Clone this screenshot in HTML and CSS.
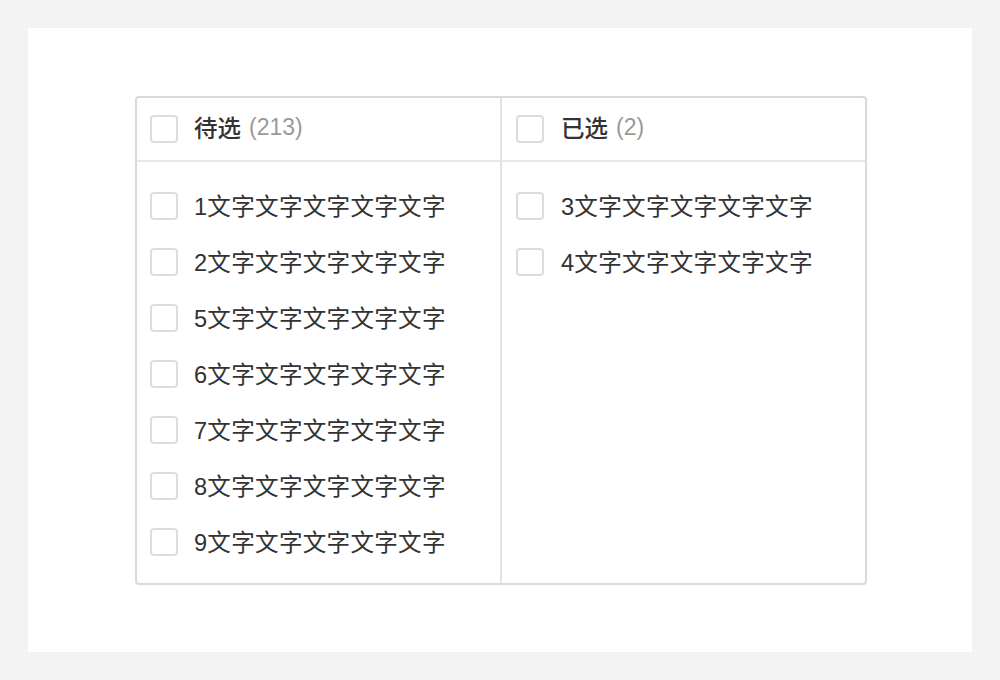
FILE: index.html
```html
<!DOCTYPE html>
<html lang="zh-CN">
<head>
<meta charset="utf-8">
<title>Transfer</title>
<link rel="stylesheet" href="styles.css">
</head>
<body>
<div class="card">
  <div class="transfer">
    <div class="panel">
      <div class="panel-head">
        <span class="checkbox"></span>
        <span class="title">待选</span><span class="count">(213)</span>
      </div>
      <ul class="list">
        <li class="item"><span class="checkbox"></span><span class="label">1文字文字文字文字文字</span></li>
        <li class="item"><span class="checkbox"></span><span class="label">2文字文字文字文字文字</span></li>
        <li class="item"><span class="checkbox"></span><span class="label">5文字文字文字文字文字</span></li>
        <li class="item"><span class="checkbox"></span><span class="label">6文字文字文字文字文字</span></li>
        <li class="item"><span class="checkbox"></span><span class="label">7文字文字文字文字文字</span></li>
        <li class="item"><span class="checkbox"></span><span class="label">8文字文字文字文字文字</span></li>
        <li class="item"><span class="checkbox"></span><span class="label">9文字文字文字文字文字</span></li>
      </ul>
    </div>
    <div class="panel panel-right">
      <div class="panel-head">
        <span class="checkbox"></span>
        <span class="title">已选</span><span class="count">(2)</span>
      </div>
      <ul class="list">
        <li class="item"><span class="checkbox"></span><span class="label">3文字文字文字文字文字</span></li>
        <li class="item"><span class="checkbox"></span><span class="label">4文字文字文字文字文字</span></li>
      </ul>
    </div>
  </div>
</div>
</body>
</html>
```

FILE: styles.css
```css
* { box-sizing: border-box; }
html, body { margin: 0; padding: 0; }
body {
  background: #f3f3f3;
  padding: 28px;
  font-family: "Liberation Sans", "Noto Sans CJK SC", sans-serif;
  color: #333;
}
.card {
  background: #fff;
  width: 944px;
  height: 624px;
  padding-top: 68px;
  display: flex;
  justify-content: center;
}
.transfer {
  width: 732px;
  height: 489px;
  margin-left: 2px;
  border: 2px solid #dadada;
  border-radius: 4px;
  display: grid;
  grid-template-columns: 363px 365px;
}
.panel { display: flex; flex-direction: column; }
.panel-right { border-left: 2px solid #e3e3e3; }
.panel-head {
  height: 64px;
  border-bottom: 2px solid #e8e8e8;
  display: flex;
  align-items: center;
  padding-left: 13px;
}
.panel-right .panel-head, .panel-right .item { padding-left: 14px; }
.checkbox {
  width: 28px;
  height: 28px;
  border: 2px solid #dcdcdc;
  border-radius: 4px;
  background: #fff;
  flex: none;
  margin-right: 16px;
}
.panel-right .checkbox { margin-right: 17px; }
.title {
  font-size: 23.5px;
  font-weight: 500;
  color: #333;
  margin-top: -4px;
}
.count {
  font-size: 23px;
  color: #999;
  margin-left: 8px;
  margin-top: -4px;
}
.list {
  list-style: none;
  margin: 0;
  padding: 16px 0 0;
}
.item {
  height: 56px;
  display: flex;
  align-items: center;
  padding-left: 13px;
}
.label {
  font-size: 23.6px;
  color: #333;
  letter-spacing: 0.25px;
  margin-top: -3px;
}
```
